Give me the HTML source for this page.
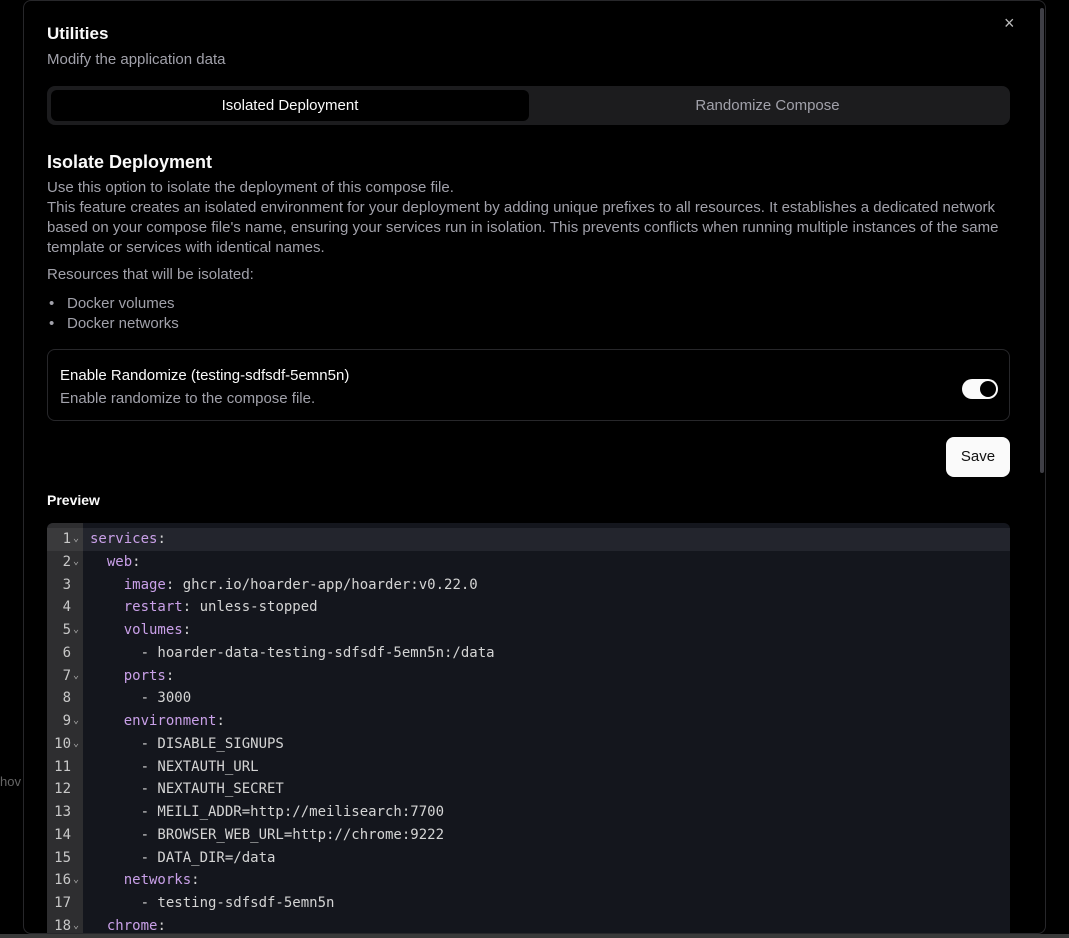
<!DOCTYPE html>
<html><head><meta charset="utf-8"><style>
*{box-sizing:border-box;margin:0;padding:0}
body{width:1069px;height:938px;background:#000;overflow:hidden;font-family:"Liberation Sans",sans-serif;color:#fafafa;position:relative}
.modal{position:absolute;left:23px;top:0px;width:1023px;height:934px;border:1px solid #27272a;border-radius:8px;background:#000;overflow:hidden}
.abs{position:absolute}
.muted{color:#a1a1aa}
.code{position:absolute;left:23px;top:522px;width:963px;height:420px;background:#14161d;border-radius:6px 6px 0 0;overflow:hidden;font-family:"DejaVu Sans Mono",monospace;font-size:14px}
.gut{position:absolute;left:0;top:0;width:36px;height:100%;background:#2e2e30}
.ln{position:absolute;left:0;width:100%;height:22.76px;line-height:22.76px;white-space:pre;color:#d4d4d4}
.ln .n{position:absolute;left:0;width:24px;text-align:right;color:#c8c8c8}
.ln .f{position:absolute;left:26px;color:#aaa;font-size:10px}
.ln .t{position:absolute;left:43px}
.k{color:#c9a0e8}
</style></head><body>
<div class="abs" style="left:0;top:934px;width:1069px;height:4px;background:#3a3a3a"></div>
<div class="modal">
<div class="abs" style="left:1016px;top:7px;width:4px;height:465px;background:#3f3f46;border-radius:2px"></div>
<div class="abs" style="left:980px;top:12px;font-size:18px;color:#bbb">×</div>
<div class="abs" style="left:23px;top:23px;font-size:17px;font-weight:bold">Utilities</div>
<div class="abs muted" style="left:23px;top:50px;font-size:15px">Modify the application data</div>
<div class="abs" style="left:23px;top:85px;width:963px;height:39px;background:#1c1c1e;border-radius:8px"></div>
<div class="abs" style="left:27px;top:89px;width:478px;height:31px;background:#000;border-radius:6px;text-align:center;line-height:31px;font-size:15px">Isolated Deployment</div>
<div class="abs muted" style="left:505px;top:89px;width:477px;height:31px;text-align:center;line-height:31px;font-size:15px">Randomize Compose</div>
<div class="abs" style="left:23px;top:151px;font-size:18px;font-weight:bold">Isolate Deployment</div>
<div class="abs muted" style="left:23px;top:177px;width:963px;font-size:15px;line-height:20px">Use this option to isolate the deployment of this compose file.<br>This feature creates an isolated environment for your deployment by adding unique prefixes to all resources. It establishes a dedicated network based on your compose file's name, ensuring your services run in isolation. This prevents conflicts when running multiple instances of the same template or services with identical names.</div>
<div class="abs muted" style="left:23px;top:265px;font-size:15px">Resources that will be isolated:</div>
<div class="abs muted" style="left:25px;top:293px;font-size:15px;line-height:20px">•</div>
<div class="abs muted" style="left:25px;top:313px;font-size:15px;line-height:20px">•</div>
<div class="abs muted" style="left:43px;top:293px;font-size:15px;line-height:20px">Docker volumes<br>Docker networks</div>
<div class="abs" style="left:23px;top:348px;width:963px;height:72px;border:1px solid #27272a;border-radius:8px"></div>
<div class="abs" style="left:36px;top:366px;font-size:15px">Enable Randomize (testing-sdfsdf-5emn5n)</div>
<div class="abs muted" style="left:36px;top:389px;font-size:15px">Enable randomize to the compose file.</div>
<div class="abs" style="left:938px;top:378px;width:36px;height:20px;background:#fafafa;border-radius:10px"><div class="abs" style="left:18px;top:2px;width:16px;height:16px;border-radius:50%;background:#000"></div></div>
<div class="abs" style="left:922px;top:436px;width:64px;height:40px;background:#fafafa;border-radius:8px;color:#111;font-size:15px;text-align:center;line-height:40px">Save</div>
<div class="abs" style="left:23px;top:491px;font-size:14px;font-weight:bold">Preview</div>
<div class="code">
<div class="gut"></div>
<div class="abs" style="left:36px;top:5px;width:927px;height:23px;background:#23252d"></div>
<div class="abs" style="left:0;top:5px;width:36px;height:23px;background:#3a3a3c"></div>
<div class="ln" style="top:5px"><span class="n">1</span><span class="f">⌄</span><span class="t"><span class="k">services</span>:</span></div>
<div class="ln" style="top:27.8px"><span class="n">2</span><span class="f">⌄</span><span class="t">  <span class="k">web</span>:</span></div>
<div class="ln" style="top:50.5px"><span class="n">3</span><span class="t">    <span class="k">image</span>: ghcr.io/hoarder-app/hoarder:v0.22.0</span></div>
<div class="ln" style="top:73.3px"><span class="n">4</span><span class="t">    <span class="k">restart</span>: unless-stopped</span></div>
<div class="ln" style="top:96px"><span class="n">5</span><span class="f">⌄</span><span class="t">    <span class="k">volumes</span>:</span></div>
<div class="ln" style="top:118.8px"><span class="n">6</span><span class="t">      - hoarder-data-testing-sdfsdf-5emn5n:/data</span></div>
<div class="ln" style="top:141.6px"><span class="n">7</span><span class="f">⌄</span><span class="t">    <span class="k">ports</span>:</span></div>
<div class="ln" style="top:164.3px"><span class="n">8</span><span class="t">      - 3000</span></div>
<div class="ln" style="top:187.1px"><span class="n">9</span><span class="f">⌄</span><span class="t">    <span class="k">environment</span>:</span></div>
<div class="ln" style="top:209.8px"><span class="n">10</span><span class="f">⌄</span><span class="t">      - DISABLE_SIGNUPS</span></div>
<div class="ln" style="top:232.6px"><span class="n">11</span><span class="t">      - NEXTAUTH_URL</span></div>
<div class="ln" style="top:255.4px"><span class="n">12</span><span class="t">      - NEXTAUTH_SECRET</span></div>
<div class="ln" style="top:278.1px"><span class="n">13</span><span class="t">      - MEILI_ADDR=http://meilisearch:7700</span></div>
<div class="ln" style="top:300.9px"><span class="n">14</span><span class="t">      - BROWSER_WEB_URL=http://chrome:9222</span></div>
<div class="ln" style="top:323.6px"><span class="n">15</span><span class="t">      - DATA_DIR=/data</span></div>
<div class="ln" style="top:346.4px"><span class="n">16</span><span class="f">⌄</span><span class="t">    <span class="k">networks</span>:</span></div>
<div class="ln" style="top:369.2px"><span class="n">17</span><span class="t">      - testing-sdfsdf-5emn5n</span></div>
<div class="ln" style="top:391.9px"><span class="n">18</span><span class="f">⌄</span><span class="t">  <span class="k">chrome</span>:</span></div>
</div>
</div>
<div class="abs" style="left:0;top:774px;font-size:13px;color:#666">hov</div>
</body></html>
